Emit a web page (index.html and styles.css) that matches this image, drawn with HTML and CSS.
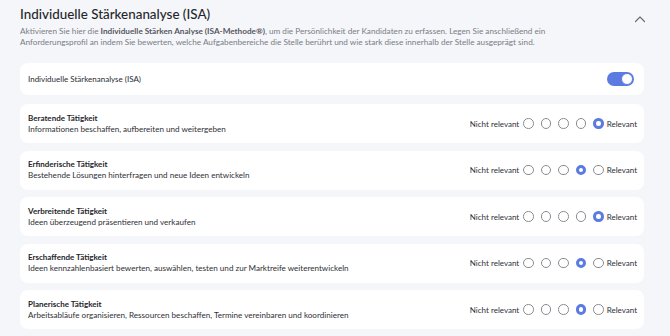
FILE: index.html
```html
<!DOCTYPE html>
<html lang="de">

<head>
    <meta charset="UTF-8">
    <meta name="viewport" content="width=device-width, initial-scale=1.0">
    <title>Individuelle Stärkenanalyse</title>
    <link rel="stylesheet" href="styles.css">
</head>

<body>
    <div class="section">
        <div class="section-header">
            <div>
                <h2 class="section-title">Individuelle Stärkenanalyse (ISA)</h2>
                <p class="section-text">Aktivieren Sie hier die <b>Individuelle Stärken Analyse (ISA-Methode®)</b>, um die Persönlichkeit der Kandidaten zu erfassen. Legen Sie anschließend ein Anforderungsprofil an indem Sie bewerten, welche Aufgabenbereiche die Stelle berührt und wie stark diese innerhalb der Stelle ausgeprägt sind.</p>
            </div>
            <button class="collapse-button">
                <svg viewBox="0 0 12 8" xmlns="http://www.w3.org/2000/svg">
                    <path d="M1.5 6.5 6 2l4.5 4.5" fill="none" stroke="#6b6f7a" stroke-width="1.2" stroke-linecap="round" stroke-linejoin="round"></path>
                </svg>
            </button>
        </div>

        <div class="card toggle-card">
            <span class="toggle-label">Individuelle Stärkenanalyse (ISA)</span>
            <span class="toggle on"><span class="knob"></span></span>
        </div>

        <div class="card row">
            <div class="row-text">
                <div class="row-title">Beratende Tätigkeit</div>
                <div class="row-desc">Informationen beschaffen, aufbereiten und weitergeben</div>
            </div>
            <div class="scale">
                <span>Nicht relevant</span>
                <span class="radio"></span><span class="radio"></span><span class="radio"></span><span class="radio"></span><span class="radio checked"></span>
                <span>Relevant</span>
            </div>
        </div>

        <div class="card row">
            <div class="row-text">
                <div class="row-title">Erfinderische Tätigkeit</div>
                <div class="row-desc">Bestehende Lösungen hinterfragen und neue Ideen entwickeln</div>
            </div>
            <div class="scale">
                <span>Nicht relevant</span>
                <span class="radio"></span><span class="radio"></span><span class="radio"></span><span class="radio checked"></span><span class="radio"></span>
                <span>Relevant</span>
            </div>
        </div>

        <div class="card row">
            <div class="row-text">
                <div class="row-title">Verbreitende Tätigkeit</div>
                <div class="row-desc">Ideen überzeugend präsentieren und verkaufen</div>
            </div>
            <div class="scale">
                <span>Nicht relevant</span>
                <span class="radio"></span><span class="radio"></span><span class="radio"></span><span class="radio"></span><span class="radio checked"></span>
                <span>Relevant</span>
            </div>
        </div>

        <div class="card row">
            <div class="row-text">
                <div class="row-title">Erschaffende Tätigkeit</div>
                <div class="row-desc">Ideen kennzahlenbasiert bewerten, auswählen, testen und zur Marktreife weiterentwickeln</div>
            </div>
            <div class="scale">
                <span>Nicht relevant</span>
                <span class="radio"></span><span class="radio"></span><span class="radio"></span><span class="radio checked"></span><span class="radio"></span>
                <span>Relevant</span>
            </div>
        </div>

        <div class="card row">
            <div class="row-text">
                <div class="row-title">Planerische Tätigkeit</div>
                <div class="row-desc">Arbeitsabläufe organisieren, Ressourcen beschaffen, Termine vereinbaren und koordinieren</div>
            </div>
            <div class="scale">
                <span>Nicht relevant</span>
                <span class="radio"></span><span class="radio"></span><span class="radio"></span><span class="radio checked"></span><span class="radio"></span>
                <span>Relevant</span>
            </div>
        </div>
    </div>
</body>

</html>
```

FILE: styles.css
```css
body {
    margin: 0;
    padding: 0;
    font-family: Lato, "Noto Sans", sans-serif;
    background: #f5f6fa;
    color: #26272d;
}

.section {
    padding: 5px 26px 0 20px;
}

.section-header {
    display: flex;
    justify-content: space-between;
    align-items: flex-start;
    margin-bottom: 16px;
}

.section-title {
    margin: 0;
    font-size: 13.4px;
    font-weight: 500;
    line-height: 18px;
    color: #25262b;
}

.section-text {
    margin: 3px 0 0;
    font-size: 8.2px;
    line-height: 10.5px;
    color: #7a7c84;
    max-width: 570px;
}

.section-text b {
    font-weight: 700;
    color: #55575e;
}

.collapse-button {
    background: none;
    border: none;
    padding: 0;
    margin: 10px -2px 0 0;
    width: 12px;
    height: 8px;
    display: flex;
}

.collapse-button svg {
    width: 12px;
    height: 8px;
}

.card {
    background: #fff;
    border-radius: 8px;
    display: flex;
    align-items: center;
    justify-content: space-between;
    padding: 0 10px 0 8px;
}

.toggle-card {
    height: 32px;
    margin-bottom: 9px;
}

.toggle-label {
    font-size: 8px;
    color: #2a2b31;
}

.toggle {
    width: 27px;
    height: 14px;
    border-radius: 7px;
    background: #5b7be0;
    display: flex;
    align-items: center;
    justify-content: flex-end;
}

.knob {
    width: 12px;
    height: 12px;
    border-radius: 50%;
    background: #fff;
    border: 1px solid #5b7be0;
    box-sizing: border-box;
    margin-right: 1px;
}

.row {
    height: 39px;
    margin-bottom: 7.5px;
    padding-right: 7px;
}

.row-title {
    font-size: 8px;
    font-weight: 700;
    line-height: 11px;
    color: #24252a;
}

.row-desc {
    font-size: 8.1px;
    line-height: 11px;
    color: #2f3036;
}

.scale {
    display: flex;
    align-items: center;
    gap: 7px;
    font-size: 8px;
    color: #2f3036;
}

.scale span:first-child {
    margin-right: -3px;
}

.scale span:last-child {
    margin-left: -4px;
}

.radio {
    width: 10.5px;
    height: 10.5px;
    border-radius: 50%;
    border: 1px solid #8a8c93;
    box-sizing: border-box;
    background: #fff;
}

.radio.checked {
    border: 3px solid #5b7be0;
}
```
